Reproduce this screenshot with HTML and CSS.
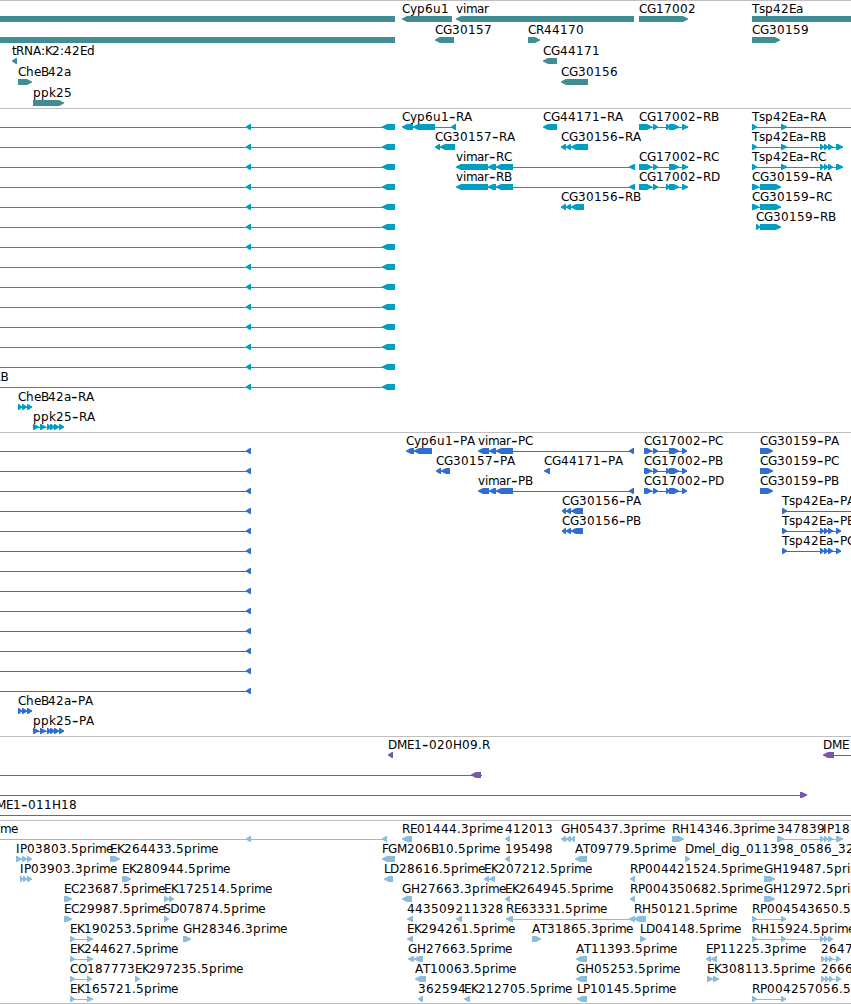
FILE: index.html
```html
<!DOCTYPE html>
<html lang="en">
<head>
<meta charset="utf-8">
<title>Genome browser</title>
<link rel="stylesheet" href="styles.css">
</head>
<body>
<main class="browser">
<section class="track genes" id="genes"></section>
<section class="track transcripts" id="transcripts"></section>
<section class="track cds" id="cds"></section>
<section class="track clones" id="clones"></section>
<section class="track ests" id="ests"></section>
</main>
<script src="tracks.js"></script>
</body>
</html>
```

FILE: styles.css
```css
body { margin: 0; background: #fff; overflow: hidden; }
.browser { display: flex; flex-direction: column; width: 851px; height: 1004px; overflow: hidden; }
.track { box-sizing: border-box; flex: none; border-top: 1px solid #bfbfbf; overflow: hidden; }
.track svg { display: block; width: 851px; height: 100%; }
.track text { font: 12px "DejaVu Sans", "Noto Sans", sans-serif; fill: #000; }
.track .dash { font-size: 18px; }
.genes { height: 108px; color: #408e94; }
.transcripts { height: 324px; color: #009ec0; }
.cds { height: 304px; color: #306dcc; }
.clones { height: 84px; color: #7559a7; }
.ests { height: 184px; color: #8abddd; border-bottom: 1px solid #bfbfbf; }
.glyph { fill: currentColor; }
```

FILE: tracks.js
```js
// Feature: row | strand | label | exons | optional label x | optional line end
const TSP = '820-824,824-828,828-833';
const CG_B = '653-658,666-670,669-679,682-688';
const CG_C = '653-658,669-679,682-688';
const PPK = '33-39,40-46,47-51,50-55,54-59,59-64';
const CHE = '18-22,22-27,27-32';

const tracks = {
  genes: { pitch: 21, rows: [
    '0|<||-20-395', '0|<|Cyp6u1|402-452', '0|<|vimar|456-634', '0|>|CG17002|639-688', '0|>|Tsp42Ea|752-880',
    '1|<||-20-395', '1|<|CG30157|435-454', '1|>|CR44170|528-540', '1|>|CG30159|752-780',
    '2|<|tRNA:K2:42Ed|12-17', '2|<|CG44171|543-557',
    '3|>|CheB42a|18-32', '3|<|CG30156|561-588',
    '4|>|ppk25|33-64'
  ]},
  transcripts: { pitch: 20, rows: [
    ...Array.from({ length: 14 }, (_, i) => `${i}|<|${i === 13 ? 'RB' : ''}|-20--10,246-251,382-395|-7.5`),
    '0|<|Cyp6u1-RA|402-413,413-435,451-456', '0|<|CG44171-RA|543-557',
    `0|>|CG17002-RB|639-652,${CG_B}`, '0|>|Tsp42Ea-RA|752-757,781-787||870',
    '1|<|CG30157-RA|435-440,440-455', '1|<|CG30156-RA|561-566,566-571,571-588',
    `1|>|Tsp42Ea-RB|752-757,781-787,${TSP},836-843`,
    '2|<|vimar-RC|456-488,488-496,496-513,629-635', `2|>|CG17002-RC|639-652,${CG_C}`,
    `2|>|Tsp42Ea-RC|752-757,781-787,${TSP},836-843`,
    '3|<|vimar-RB|456-488,488-496,496-513,629-635', `3|>|CG17002-RD|639-652,${CG_B}`, '3|>|CG30159-RA|752-759,760-781',
    '4|<|CG30156-RB|561-566,566-571,571-584', '4|>|CG30159-RC|752-759,760-781',
    '5|>|CG30159-RB|756-760,760-781',
    `14|>|CheB42a-RA|${CHE}`, `15|>|ppk25-RA|${PPK}`
  ]},
  cds: { pitch: 20, rows: [
    ...Array.from({ length: 13 }, (_, i) => `${i}|<||-20--10,246-251`),
    '0|<|Cyp6u1-PA|406-414,414-432', '0|<|vimar-PC|478-489,489-496,496-513,629-634',
    '0|>|CG17002-PC|644-652,653-658,669-679,682-687', '0|>|CG30159-PA|760-773',
    '1|<|CG30157-PA|436-441,441-450', '1|<|CG44171-PA|544-550',
    '1|>|CG17002-PB|644-652,653-658,666-670,669-679,682-687', '1|>|CG30159-PC|760-773',
    '2|<|vimar-PB|478-489,489-496,496-513,629-634',
    '2|>|CG17002-PD|644-652,653-658,666-670,669-679,682-687', '2|>|CG30159-PB|760-773',
    '3|<|CG30156-PA|562-566,566-571,571-583', '3|>|Tsp42Ea-PA|782-787||870',
    '4|<|CG30156-PB|562-566,566-571,571-583', `4|>|Tsp42Ea-PB|782-787,${TSP},836-841`,
    `5|>|Tsp42Ea-PC|782-787,${TSP},836-841`,
    `13|>|CheB42a-PA|${CHE}`, `14|>|ppk25-PA|${PPK}`
  ]},
  clones: { pitch: 20, rows: [
    '0|<|DME1-020H09.R|388-393', '0|<|DME|823-834||870',
    '1|<||-20--10,471-481||482', '2|>||-20--10,800-807', '3|>|DME1-011H18|-20--10|-13|870'
  ]},
  ests: { pitch: 20, rows: [
    '0|<|prime|-20--10,246-251,382-387|-16', '0|<|RE01444.3prime|402-412', '0|<|412013|505-510',
    '0|<|GH05437.3prime|561-566,566-571,571-575', '0|>|RH14346.3prime|672-684', '0|>|347839|777-784||820',
    `0|>|IP18|${TSP},836-843|823`,
    '1|>|IP03803.5prime|16-22,22-27,27-32', '1|>|EK264433.5prime|110-120', '1|<|FGM206B10.5prime|382-395',
    '1|<|195498|505-510', '1|<|AT09779.5prime|575-587', '1|>|Dmel_dig_011398_0586_32|685-690',
    '2|>|IP03903.3prime|20-23,23-27,27-32', '2|>|EK280944.5prime|122-131', '2|<|LD28616.5prime|384-393',
    '2|<|EK207212.5prime|484-489,489-495', '2|<|RP004421524.5prime|630-635', '2|>|GH19487.5prime|764-775',
    '3|>|EC23687.5prime|64-72', '3|>|EK172514.5prime|164-169,169-174', '3|<|GH27663.3prime|402-412',
    '3|<|EK264945.5prime|505-510', '3|<|RP004350682.5prime|630-635', '3|>|GH12972.5prime|764-775',
    '4|>|EC29987.5prime|64-72', '4|>|SD07874.5prime|164-169|163.3', '4|<|443509|407-413', '4|<|211328|456-462|455.5',
    '4|<|RE63331.5prime|506-513,629-635', '4|<|RH50121.5prime|634-646', '4|>|RP004543650.5prime|752-757,781-786',
    '5|>|EK190253.5prime|70-75,87-93', '5|>|GH28346.3prime|183-191', '5|<|EK294261.5prime|407-413',
    '5|>|AT31865.3prime|532-541', '5|>|LD04148.5prime|640-646', `5|>|RH15924.5prime|752-757,781-786,${TSP}`,
    '6|>|EK244627.5prime|70-75,87-93', '6|<|GH27663.5prime|408-414,414-423', '6|<|AT11393.5prime|576-587',
    '6|<|EP11225.3prime|706-711,711-717', '6|>|2647|821-825,825-829,829-833,836-841',
    '7|>|CO187773|70-75,87-92', '7|>|EK297235.5prime|135-140', '7|<|AT10063.5prime|415-426',
    '7|<|GH05253.5prime|576-587', '7|>|EK308113.5prime|707-713,713-719', '7|>|2666|821-825,825-829,829-833,836-841',
    '8|>|EK165721.5prime|70-75,87-93', '8|<|362594|418-423', '8|<|EK212705.5prime|464-470',
    '8|<|LP10145.5prime|577-587', '8|>|RP004257056.5prime|752-757,781-786'
  ]}
};

// Character advances in pixels
const advance = { A: 8, B: 7, C: 8, D: 9, E: 7, F: 6, G: 9, H: 9, I: 4, K: 7, L: 6, M: 10, N: 9, O: 9, P: 7, R: 8, S: 7, T: 7,
  a: 7, d: 8, e: 7, g: 8, h: 8, i: 3, k: 7, l: 3, m: 11, p: 8, r: 5, s: 6, t: 4, u: 8, v: 7, y: 7,
  '-': 7, '.': 4, ':': 4, _: 6 };

function label(text, x, y) {
  let spans = '';
  for (const part of text.split(/(-)/)) {
    if (part === '-') {
      spans += `<tspan class="dash" x="${x}" y="${y + 1}">-</tspan>`;
      x += advance['-'];
      continue;
    }
    const xs = [];
    for (const c of part) { xs.push(x); x += advance[c] || 8; }
    spans += `<tspan x="${xs.join(' ')}" y="${y}">${part}</tspan>`;
  }
  return `<text>${spans}</text>`;
}

function exon(a, b, y, strand) {
  const head = Math.min(5, b - a - 1);
  return strand === '<'
    ? `<path class="glyph" d="M${a} ${y + 2.5}L${a + head} ${y}H${b}V${y + 6}H${a + head}L${a} ${y + 3.5}Z"/>`
    : `<path class="glyph" d="M${a} ${y}H${b - head}L${b} ${y + 2.5}V${y + 3.5}L${b - head} ${y + 6}H${a}Z"/>`;
}

for (const [id, track] of Object.entries(tracks)) {
  let shapes = '', labels = '';
  for (const item of track.rows) {
    const [row, strand, name, spans, labelX, lineEnd] = item.split('|');
    const y = 15 + row * track.pitch;
    const exons = spans.split(',').map(s => s.match(/^(-?\d+)-(-?\d+)$/).slice(1).map(Number));
    const start = exons[0][0];
    const end = Number(lineEnd) || exons[exons.length - 1][1];
    if (exons.length > 1 || lineEnd) shapes += `<rect class="glyph" x="${start + 1}" y="${y + 3}" width="${end - start - 1}" height="1"/>`;
    for (const [a, b] of exons) shapes += exon(a, b, y, strand);
    if (name) labels += label(name, labelX ? Number(labelX) : start, y - 3);
  }
  document.getElementById(id).innerHTML = `<svg>${shapes}${labels}</svg>`;
}
```
